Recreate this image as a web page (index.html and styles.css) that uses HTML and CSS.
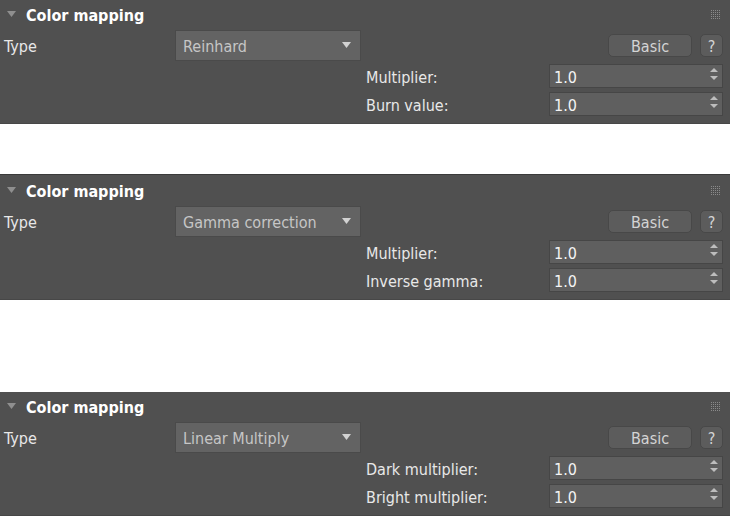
FILE: index.html
```html
<!DOCTYPE html>
<html lang="en">
<head>
    <meta charset="UTF-8">
    <title>Color mapping</title>
    <link rel="stylesheet" href="styles.css">
</head>
<body>
    <section class="panel panel--cut">
        <div class="panel-head">
            <svg class="fold" width="9" height="6" viewBox="0 0 9 6"><polygon points="0,0 9,0 4.5,6"/></svg>
            <h2 class="panel-title">Color mapping</h2>
            <svg class="grip" width="9" height="9" viewBox="0 0 9 9"><defs><pattern id="dots1" width="2" height="2" patternUnits="userSpaceOnUse"><rect width="1" height="1" fill="#8a8a8a"/></pattern></defs><rect width="9" height="9" fill="url(#dots1)"/></svg>
        </div>
        <div class="row-type">
            <span class="type-label">Type</span>
            <div class="dropdown">
                <span class="value">Reinhard</span>
                <svg class="arrow" width="9" height="6" viewBox="0 0 9 6"><polygon points="0,0 9,0 4.5,6"/></svg>
            </div>
            <div class="actions">
                <button class="btn btn-basic">Basic</button>
                <button class="btn btn-help">?</button>
            </div>
        </div>
        <div class="row-param">
            <span class="param-label">Multiplier:</span>
            <div class="spinner">
                <span class="value">1.0</span>
                <svg class="spin" width="8" height="13" viewBox="0 0 8 13"><polygon points="0,4 8,4 4,0"/><polygon points="0,8 8,8 4,12"/></svg>
            </div>
        </div>
        <div class="row-param">
            <span class="param-label">Burn value:</span>
            <div class="spinner">
                <span class="value">1.0</span>
                <svg class="spin" width="8" height="13" viewBox="0 0 8 13"><polygon points="0,4 8,4 4,0"/><polygon points="0,8 8,8 4,12"/></svg>
            </div>
        </div>
    </section>

    <section class="panel panel--second">
        <div class="panel-head">
            <svg class="fold" width="9" height="6" viewBox="0 0 9 6"><polygon points="0,0 9,0 4.5,6"/></svg>
            <h2 class="panel-title">Color mapping</h2>
            <svg class="grip" width="9" height="9" viewBox="0 0 9 9"><defs><pattern id="dots2" width="2" height="2" patternUnits="userSpaceOnUse"><rect width="1" height="1" fill="#8a8a8a"/></pattern></defs><rect width="9" height="9" fill="url(#dots2)"/></svg>
        </div>
        <div class="row-type">
            <span class="type-label">Type</span>
            <div class="dropdown">
                <span class="value">Gamma correction</span>
                <svg class="arrow" width="9" height="6" viewBox="0 0 9 6"><polygon points="0,0 9,0 4.5,6"/></svg>
            </div>
            <div class="actions">
                <button class="btn btn-basic">Basic</button>
                <button class="btn btn-help">?</button>
            </div>
        </div>
        <div class="row-param">
            <span class="param-label">Multiplier:</span>
            <div class="spinner">
                <span class="value">1.0</span>
                <svg class="spin" width="8" height="13" viewBox="0 0 8 13"><polygon points="0,4 8,4 4,0"/><polygon points="0,8 8,8 4,12"/></svg>
            </div>
        </div>
        <div class="row-param">
            <span class="param-label">Inverse gamma:</span>
            <div class="spinner">
                <span class="value">1.0</span>
                <svg class="spin" width="8" height="13" viewBox="0 0 8 13"><polygon points="0,4 8,4 4,0"/><polygon points="0,8 8,8 4,12"/></svg>
            </div>
        </div>
    </section>

    <section class="panel panel--cut panel--third">
        <div class="panel-head">
            <svg class="fold" width="9" height="6" viewBox="0 0 9 6"><polygon points="0,0 9,0 4.5,6"/></svg>
            <h2 class="panel-title">Color mapping</h2>
            <svg class="grip" width="9" height="9" viewBox="0 0 9 9"><defs><pattern id="dots3" width="2" height="2" patternUnits="userSpaceOnUse"><rect width="1" height="1" fill="#8a8a8a"/></pattern></defs><rect width="9" height="9" fill="url(#dots3)"/></svg>
        </div>
        <div class="row-type">
            <span class="type-label">Type</span>
            <div class="dropdown">
                <span class="value">Linear Multiply</span>
                <svg class="arrow" width="9" height="6" viewBox="0 0 9 6"><polygon points="0,0 9,0 4.5,6"/></svg>
            </div>
            <div class="actions">
                <button class="btn btn-basic">Basic</button>
                <button class="btn btn-help">?</button>
            </div>
        </div>
        <div class="row-param">
            <span class="param-label">Dark multiplier:</span>
            <div class="spinner">
                <span class="value">1.0</span>
                <svg class="spin" width="8" height="13" viewBox="0 0 8 13"><polygon points="0,4 8,4 4,0"/><polygon points="0,8 8,8 4,12"/></svg>
            </div>
        </div>
        <div class="row-param">
            <span class="param-label">Bright multiplier:</span>
            <div class="spinner">
                <span class="value">1.0</span>
                <svg class="spin" width="8" height="13" viewBox="0 0 8 13"><polygon points="0,4 8,4 4,0"/><polygon points="0,8 8,8 4,12"/></svg>
            </div>
        </div>
    </section>
</body>
</html>
```

FILE: styles.css
```css
body {
    margin: 0;
    background: #fff;
    font-family: "DejaVu Sans Condensed", "DejaVu Sans", Verdana, sans-serif;
    font-stretch: condensed;
    font-size: 16px;
    color: #e6e6e6;
    overflow: hidden;
}

.panel {
    background: #505050;
    border-top: 1px solid #3a3a3a;
    border-bottom: 1px solid #474747;
    padding: 1px 7px 7px 4px;
}

.panel--cut {
    border-top: 0;
    padding-top: 0;
}

.panel--second {
    margin-top: 50px;
}

.panel--third {
    margin-top: 92px;
}

/* header */
.panel-head {
    display: flex;
    align-items: flex-start;
    height: 27px;
}

.fold {
    margin: 11px 0 0 3px;
    fill: #8f8f8f;
}

.panel-title {
    margin: 0 0 0 10px;
    padding-top: 5px;
    font-size: 16px;
    line-height: 22px;
    font-weight: bold;
    color: #fff;
}

.grip {
    margin: 10px 3px 0 auto;
}

/* type row */
.row-type {
    display: flex;
    align-items: baseline;
    margin-top: 3px;
}

.type-label {
    width: 171px;
    color: #e8e8e8;
}

.dropdown {
    box-sizing: border-box;
    display: flex;
    align-items: flex-start;
    width: 186px;
    height: 31px;
    padding: 0 9px 0 7px;
    background: #636363;
    border: 1px solid #4a4a4a;
    color: #c6c6c6;
}

.dropdown .value {
    padding-top: 6px;
    line-height: 20px;
}

.arrow {
    margin: 11px 0 0 auto;
    fill: #d2d2d2;
}

.actions {
    display: flex;
    align-items: baseline;
    gap: 8px;
    margin-left: auto;
}

.btn {
    box-sizing: border-box;
    height: 23px;
    padding: 3px 0 0;
    background: #5c5c5c;
    border: 1px solid #484848;
    border-radius: 5px;
    font-family: inherit;
    font-stretch: condensed;
    font-size: 16px;
    line-height: 18px;
    color: #d4d4d4;
    text-align: center;
}

.btn-basic {
    width: 84px;
}

.btn-help {
    width: 23px;
}

/* parameter rows */
.row-param {
    display: flex;
    align-items: baseline;
    padding-left: 362px;
    margin-top: 4px;
}

.row-type + .row-param {
    margin-top: 3px;
}

.param-label {
    width: 183px;
    color: #e8e8e8;
}

.spinner {
    box-sizing: border-box;
    display: flex;
    align-items: flex-start;
    width: 174px;
    height: 24px;
    padding: 0 4px;
    background: #5f5f5f;
    border: 1px solid #464646;
    color: #f4f4f4;
}

.spinner .value {
    padding-top: 3px;
    line-height: 19px;
}

.spin {
    margin: 3px 0 0 auto;
    fill: #bdbdbd;
}
```
